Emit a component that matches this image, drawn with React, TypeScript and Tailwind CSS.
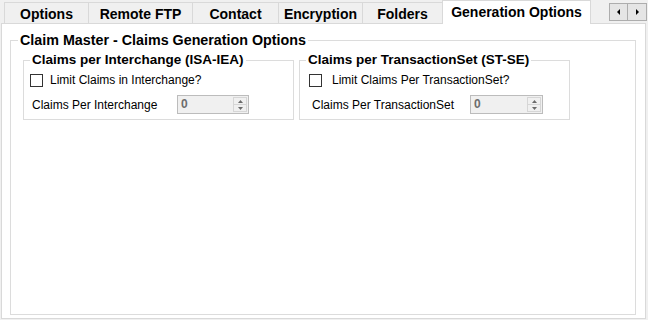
import React from 'react';

const TABS: { label: string; w: string }[] = [
  { label: 'Options', w: 'w-[84px]' },
  { label: 'Remote FTP', w: 'w-[104px]' },
  { label: 'Contact', w: 'w-[86px]' },
  { label: 'Encryption', w: 'w-[84px]' },
  { label: 'Folders', w: 'w-[80px]' },
];

function Arrow({ dir }: { dir: 'up' | 'down' | 'left' | 'right' }) {
  const pts = {
    up: '0,3 2.5,0 5,3',
    down: '0,0 5,0 2.5,3',
    left: '3,0 3,6 0,3',
    right: '0,0 3,3 0,6',
  }[dir];
  const w = dir === 'up' || dir === 'down' ? 5 : 3;
  const h = dir === 'up' || dir === 'down' ? 3 : 6;
  return (
    <svg width={w} height={h} viewBox={`0 0 ${w} ${h}`}>
      <polygon points={pts} fill={dir === 'left' || dir === 'right' ? '#000' : '#6b6b6b'} />
    </svg>
  );
}

function CheckBox() {
  return <span className="block h-[13px] w-[13px] flex-shrink-0 border border-[#333] bg-white" />;
}

function NumBox({ className }: { className: string }) {
  return (
    <div className={`flex h-[19px] border border-[#bcbcbc] bg-[#f0f0f0] ${className}`}>
      <span className="flex-1 pl-[3px] text-[12px] font-bold leading-[17px] text-[#6d6d6d]">0</span>
      <div className="my-px mr-px flex w-[14px] flex-col">
        <div className="flex flex-1 items-center justify-center border border-[#d6d6d6] bg-[#f0f0f0]">
          <Arrow dir="up" />
        </div>
        <div className="flex flex-1 items-center justify-center border border-t-0 border-[#d6d6d6] bg-[#f0f0f0]">
          <Arrow dir="down" />
        </div>
      </div>
    </div>
  );
}

export default function App() {
  return (
    <div
      className="relative h-[320px] w-[648px] overflow-hidden bg-[#f0f0f0] text-black"
      style={{ fontFamily: '"Liberation Sans", Arial, sans-serif' }}
    >
      {/* Tab strip */}
      <div className="flex h-[23px] items-end pl-[4px]">
        {TABS.map((t) => (
          <div
            key={t.label}
            className={`flex h-[21px] items-center justify-center border-l border-t border-[#d9d9d9] pt-[1px] text-[14px] font-bold leading-[16px] ${t.w}`}
          >
            {t.label}
          </div>
        ))}
        <div className="relative z-10 -mb-px flex h-[24px] w-[149px] items-center justify-center border-x border-t border-[#d9d9d9] bg-white pb-[1px] text-[14px] font-bold leading-[16px]">
          Generation Options
        </div>
        <div className="mb-[2px] ml-auto mr-[1px] flex self-start pt-[3px]">
          <button className="flex h-[18px] w-[19px] items-center justify-center border border-[#adadad] bg-[#e5e5e5]">
            <Arrow dir="left" />
          </button>
          <button className="flex h-[18px] w-[19px] items-center justify-center border border-l-0 border-[#adadad] bg-[#e5e5e5]">
            <Arrow dir="right" />
          </button>
        </div>
      </div>

      {/* Tab page */}
      <div className="ml-[1px] h-[296px] w-[645px] border border-[#d9d9d9] bg-white pt-[8px]">
        <fieldset className="ml-[8px] h-[283px] w-[626px] border border-[#dcdcdc]">
          <legend className="ml-[7px] px-[2px] text-[14.3px] font-bold leading-[16px]">
            Claim Master - Claims Generation Options
          </legend>

          <div className="mt-[4px] flex">
            {/* Interchange */}
            <fieldset className="ml-[12px] h-[68px] w-[271px] border border-[#dcdcdc]">
              <legend className="ml-[6px] px-[2px] text-[13.5px] font-bold leading-[16px]">
                Claims per Interchange (ISA-IEA)
              </legend>
              <div className="mt-[5px] flex items-center gap-[7px] pl-[6px]">
                <CheckBox />
                <span className="text-[12px] leading-[14px]">Limit Claims in Interchange?</span>
              </div>
              <div className="mt-[8px] flex items-center pl-[8px]">
                <span className="w-[145px] text-[12px] leading-[14px]">Claims Per Interchange</span>
                <NumBox className="w-[72px]" />
              </div>
            </fieldset>

            {/* Transaction set */}
            <fieldset className="ml-[5px] h-[68px] w-[271px] border border-[#dcdcdc]">
              <legend className="ml-[6px] px-[2px] text-[13.5px] font-bold leading-[16px]">
                Claims per TransactionSet (ST-SE)
              </legend>
              <div className="mt-[5px] flex items-center gap-[10px] pl-[9px]">
                <CheckBox />
                <span className="text-[12px] leading-[14px]">Limit Claims Per TransactionSet?</span>
              </div>
              <div className="mt-[8px] flex items-center pl-[12px]">
                <span className="w-[158px] text-[12px] leading-[14px]">Claims Per TransactionSet</span>
                <NumBox className="w-[73px]" />
              </div>
            </fieldset>
          </div>
        </fieldset>
      </div>
    </div>
  );
}
